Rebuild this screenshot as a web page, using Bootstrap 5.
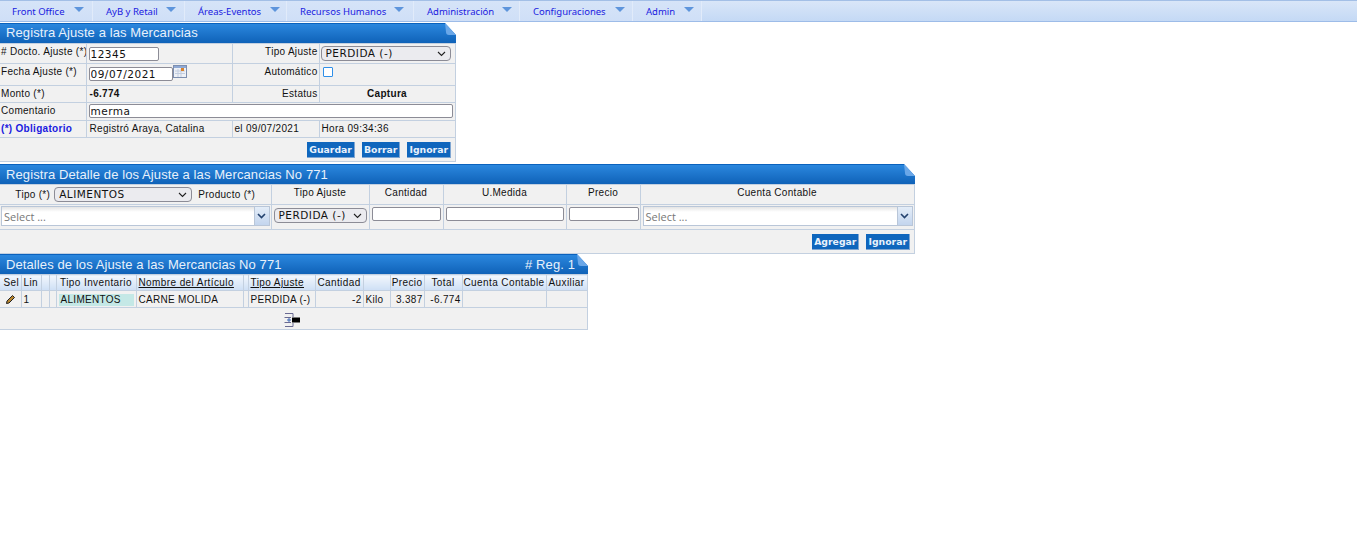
<!DOCTYPE html>
<html lang="es">
<head>
<meta charset="utf-8">
<title>Ajuste</title>
<link rel="stylesheet" href="https://cdn.jsdelivr.net/npm/bootstrap@5.3.0/dist/css/bootstrap.min.css">
<style>
html,body{background:#fff;margin:0;height:548px;overflow:hidden}
body{font-family:"Liberation Sans",Arial,sans-serif;font-size:10px;line-height:13px;color:#111;letter-spacing:.3px}
.topmenu{height:22px;background:linear-gradient(#d9e6f8,#c4d9f5);border-top:1px solid #a3bfe6;border-bottom:1px solid #9dbce8;margin-bottom:1px}
.topitem{height:20px;display:flex;align-items:center;padding-top:1px;font-family:"Noto Sans",Tahoma,sans-serif;font-size:9.5px;letter-spacing:0;color:#1a1ae0;border-right:1px solid #e1ebfa;background:linear-gradient(#d6e4f8,#cfdff7);position:relative;padding-left:12px;text-decoration:none}
.tri{position:absolute;top:6px;width:0;height:0;border-left:5.5px solid transparent;border-right:5.5px solid transparent;border-top:5px solid #5e95dc}
.m1{width:93px}.m1 .tri{left:74px}
.m2{width:92px;padding-left:13px}.m2 .tri{left:73px}
.m3{width:102px;padding-left:13px}.m3 .tri{left:85px}
.m4{width:127px;padding-left:13px}.m4 .tri{left:107px}
.m5{width:106px;padding-left:13px}.m5 .tri{left:88px}
.m6{width:113px;padding-left:13px}.m6 .tri{left:95px}
.m7{width:69px;padding-left:13px}.m7 .tri{left:51px}
.panel-a{width:456px}.panel-b{width:915px}.panel-c{width:588px}
.panel-a,.panel-b,.panel-c{position:relative;background:#f1f1f1}
.ttl{height:20px;background:linear-gradient(#2b87de,#0f62b8);border-top:1px solid #0b62bd;color:#e8f1fb;font-size:13px;line-height:17px;padding:0 7px 0 6px;letter-spacing:.1px;display:flex;justify-content:space-between}
.panel-b .ttl,.panel-c .ttl{line-height:19px}
.regn{margin-right:6px}
.fold{position:absolute;right:0;top:0;width:11px;height:12px}
table.gr{table-layout:fixed;border-collapse:collapse;width:calc(100% - 1px);background:#f1f1f1}
table.gr td,table.gr th{border:1px solid #c3d0e0;padding:0 1px;font-weight:400;overflow:hidden;white-space:nowrap}
table.gr tr>:first-child{border-left:0}
.foot{background:#f1f1f1;display:flex;justify-content:flex-end;gap:7px;align-items:center;border:1px solid #c3d0e0;border-top:0;border-left:0}
.fa{height:24px;padding-right:4px}
.fb{height:24px;padding-right:4px}
.fc{height:22px;justify-content:flex-start;padding-left:284px}
.fc svg{margin-top:2px}
.bt{background:#0f66bd;color:#e9f2fc;font-family:"DejaVu Sans",Verdana,sans-serif;font-weight:700;font-size:9.3px;letter-spacing:0;line-height:13px;height:16px;border:0;border-right:1px solid #7fa6d2;border-bottom:1px solid #7fa6d2;border-radius:0;padding:0 2px}
.in{font-family:"DejaVu Sans",Verdana,sans-serif;font-size:10.5px;letter-spacing:.5px;color:#111;border:1px solid #8c8c96;border-radius:2px;background:#fff;height:14px;padding:0 1px;display:block;outline:0;box-sizing:border-box}
.sl{appearance:none;font-family:"DejaVu Sans",Verdana,sans-serif;font-size:10.5px;letter-spacing:.5px;color:#111;border:1px solid #8c8c96;border-radius:4px;background:#ebebef url("data:image/svg+xml,%3Csvg xmlns='http://www.w3.org/2000/svg' width='9' height='6'%3E%3Cpath d='M1 1L4.5 4.5L8 1' fill='none' stroke='%23222' stroke-width='1.1'/%3E%3C/svg%3E") no-repeat right 4px center;height:15px;padding:0 0 0 4px;display:block;outline:0;box-sizing:border-box}
.r1{height:20px}.r2{height:22px}.r3{height:17px}.r4{height:18px}.r5{height:17px}
.ra{text-align:right}
table.gr td.ra{padding-right:1px}
.ca{text-align:center}
table.gr td.req{color:#1a1ae0;font-weight:700}
.chk{width:10px;height:10px;border:1px solid #2f8fe8;background:#fff;display:block;margin:0 0 0 2px;border-radius:1px}
.sel2{display:flex;height:20px;border:1px solid #b9c6d8;background:linear-gradient(#e4e4e4 0,#fff 5px);color:#777;font-family:"Open Sans","Noto Sans",sans-serif;font-size:11px;letter-spacing:0;line-height:20px;padding-left:2px;justify-content:space-between}
.sel2b{width:15px;height:18px;background:linear-gradient(#e4edf8,#c3d5ee);border-left:1px solid #b9c6d8;display:flex;align-items:center;justify-content:center}
.hd th{background:linear-gradient(#f3f7fd,#cddff5);height:16px;letter-spacing:.4px}
.hd u{text-underline-offset:1px}
table.gr th.selh{padding-left:3px}
.tint{background:#c4e8e6;display:block;height:12px;line-height:12px;padding-left:2px;margin:1px 1px 0}
.h20{height:20px}.h25{height:25px}.h17{height:17px}
table.gr td.top{vertical-align:top;padding-top:1px}
table.gr td.top2{vertical-align:top;padding-top:3px}
table.gr td.up{padding-bottom:2px}
table.gr td.first{padding-top:2px;vertical-align:top}
.hv td{vertical-align:top}
table.gr .hv td{padding-top:1px}
table.gr .hv td.pad2{padding-top:2px}
table.gr .hv td.pad3{padding-top:3px}
.ml1{margin-left:1px}.ml2{margin-left:2px}
.mt1x{margin-top:2px}
.w70{width:70px}.w84{width:84px}.w130{width:130px}.w364{width:364px}.w138{width:138px}.w93{width:93px}.w69{width:69px}.w118{width:118px}
</style>
</head>
<body>
<nav class="topmenu d-flex">
  <a class="topitem m1">Front Office<span class="tri"></span></a>
  <a class="topitem m2">AyB y Retail<span class="tri"></span></a>
  <a class="topitem m3">Áreas-Eventos<span class="tri"></span></a>
  <a class="topitem m4">Recursos Humanos<span class="tri"></span></a>
  <a class="topitem m5">Administración<span class="tri"></span></a>
  <a class="topitem m6">Configuraciones<span class="tri"></span></a>
  <a class="topitem m7">Admin<span class="tri"></span></a>
</nav>

<section class="panel-a">
  <div class="ttl">Registra Ajuste a las Mercancias</div>
  <svg class="fold" viewBox="0 0 11 12"><path d="M0 0L11 12V0Z" fill="#fff"/><path d="M0 0L11 12H4Q1 12 1 9Z" fill="#6aa7e8"/></svg>
  <table class="gr">
    <colgroup><col width="86"><col width="146"><col width="87"><col width="136"></colgroup>
    <tr class="r1"><td class="top">#&nbsp;Docto. Ajuste (*)</td><td><input class="in ml1 w70" value="12345"></td><td class="ra top">Tipo Ajuste</td><td><select class="sl w130"><option>PERDIDA (-)</option></select></td></tr>
    <tr class="r2"><td class="top">Fecha Ajuste (*)</td><td class="top"><div class="d-flex align-items-start ml1"><input class="in w84 mt1x" value="09/07/2021"><svg width="14" height="13" viewBox="0 0 14 13"><rect x=".5" y=".5" width="13" height="12" fill="#eef1f6" stroke="#7d8fb0"/><rect x="1" y="1" width="12" height="2" fill="#8fa9d4"/><path d="M2 6h10M2 8.500h10M5 4v8M8 4v8" stroke="#c2cde0"/><rect x="8" y="3" width="3" height="3" fill="#d9822b"/></svg></div></td><td class="ra top">Automático</td><td class="top2"><span class="chk"></span></td></tr>
    <tr class="r3"><td class="up">Monto (*)</td><td class="up"><b class="ml2">-6.774</b></td><td class="ra up">Estatus</td><td class="ca up"><b>Captura</b></td></tr>
    <tr class="r4"><td class="up">Comentario</td><td colspan="3" class="up"><input class="in ml1 w364" value="merma"></td></tr>
    <tr class="r5"><td class="req up">(*) Obligatorio</td><td class="up"><span class="ml2">Registró Araya, Catalina</span></td><td class="up"><span class="ml1">el 09/07/2021</span></td><td class="up"><span class="ml1">Hora 09:34:36</span></td></tr>
  </table>
  <div class="foot fa"><button class="bt btn">Guardar</button><button class="bt btn">Borrar</button><button class="bt btn">Ignorar</button></div>
</section>

<section class="panel-b mt1x">
  <div class="ttl">Registra Detalle de los Ajuste a las Mercancias No 771</div>
  <svg class="fold" viewBox="0 0 11 12"><path d="M0 0L11 12V0Z" fill="#fff"/><path d="M0 0L11 12H4Q1 12 1 9Z" fill="#6aa7e8"/></svg>
  <table class="gr">
    <colgroup><col width="271"><col width="98"><col width="74"><col width="123"><col width="74"><col width="274"></colgroup>
    <tr class="h20"><td class="ca first"><div class="d-flex justify-content-center align-items-center gap-1">Tipo (*) <select class="sl w138"><option>ALIMENTOS</option></select> <span class="ml2">Producto (*)</span></div></td><td class="ca top">Tipo Ajuste</td><td class="ca top">Cantidad</td><td class="ca top">U.Medida</td><td class="ca top">Precio</td><td class="ca top">Cuenta Contable</td></tr>
    <tr class="h25 hv"><td><div class="sel2"><span>Select ...</span><span class="sel2b"><svg width="9" height="6" viewBox="0 0 9 6"><path d="M1 1L4.5 4.5L8 1" fill="none" stroke="#24426e" stroke-width="1.6"/></svg></span></div></td><td class="pad3"><select class="sl ml1 w93"><option>PERDIDA (-)</option></select></td><td class="pad2"><input class="in ml1 w69"></td><td class="pad2"><input class="in ml1 w118"></td><td class="pad2"><input class="in ml1 w70"></td><td><div class="sel2 ml1"><span>Select ...</span><span class="sel2b"><svg width="9" height="6" viewBox="0 0 9 6"><path d="M1 1L4.5 4.5L8 1" fill="none" stroke="#24426e" stroke-width="1.6"/></svg></span></div></td></tr>
  </table>
  <div class="foot fb"><button class="bt btn">Agregar</button><button class="bt btn">Ignorar</button></div>
</section>

<section class="panel-c">
  <div class="ttl"><span>Detalles de los Ajuste a las Mercancias No 771</span><span class="regn"># Reg. 1</span></div>
  <svg class="fold" viewBox="0 0 11 12"><path d="M0 0L11 12V0Z" fill="#fff"/><path d="M0 0L11 12H4Q1 12 1 9Z" fill="#6aa7e8"/></svg>
  <table class="gr">
    <colgroup><col width="21"><col width="20"><col width="8"><col width="7"><col width="80"><col width="107"><col width="5"><col width="67"><col width="48"><col width="27"><col width="34"><col width="38"><col width="84"><col width="41"></colgroup>
    <tr class="hd"><th class="ca selh">Sel</th><th><span class="ml1">Lin</span></th><th></th><th></th><th class="ca">Tipo Inventario</th><th><u class="ml1">Nombre del Artículo</u></th><th></th><th><u class="ml1">Tipo Ajuste</u></th><th class="ca">Cantidad</th><th></th><th class="ca">Precio</th><th class="ca">Total</th><th class="ca">Cuenta Contable</th><th class="ca">Auxiliar</th></tr>
    <tr class="h17"><td class="ca"><svg width="11" height="11" viewBox="0 0 11 11"><path d="M2 7L7.500 1.500L9.500 3.500L4 9L1.500 9.500Z" fill="#b8862f" stroke="#222"/></svg></td><td><span class="ml1">1</span></td><td></td><td></td><td><span class="tint">ALIMENTOS</span></td><td><span class="ml1">CARNE MOLIDA</span></td><td></td><td><span class="ml1">PERDIDA (-)</span></td><td class="ra">-2</td><td><span class="ml1">Kilo</span></td><td class="ra">3.387</td><td class="ra">-6.774</td><td></td><td></td></tr>
  </table>
  <div class="foot fc"><svg width="16" height="14" viewBox="0 0 16 14"><path d="M1 .5H9V4M9 10V13.500H1M.5 4.500H7M.5 9.500H7" fill="none" stroke="#6a6a92"/><path d="M3 7H7M5 5V9" stroke="#3a66b5"/><path d="M8 4.500H16V9.500H8Z" fill="#000"/></svg></div>
</section>

<script src="https://cdn.jsdelivr.net/npm/bootstrap@5.3.0/dist/js/bootstrap.bundle.min.js"></script>
</body>
</html>
